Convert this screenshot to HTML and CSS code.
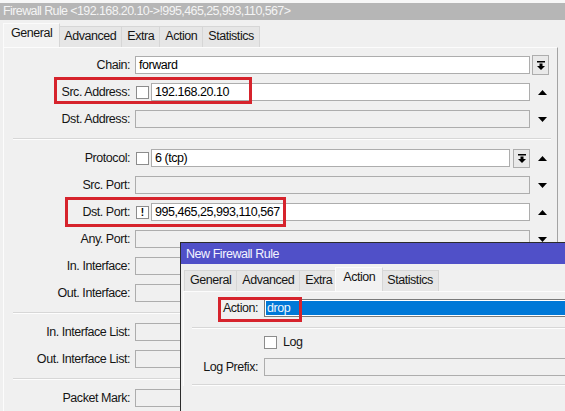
FILE: index.html
```html
<!DOCTYPE html>
<html>
<head>
<meta charset="utf-8">
<title>Firewall Rule</title>
<link rel="stylesheet" href="styles.css">
</head>
<body>
<div class="main">
  <div class="titlebar">Firewall Rule &lt;192.168.20.10-&gt;!995,465,25,993,110,567&gt;</div>
  <div class="tabs">
    <div class="tab sel">General</div>
    <div class="tab">Advanced</div>
    <div class="tab">Extra</div>
    <div class="tab">Action</div>
    <div class="tab">Statistics</div>
  </div>
  <div class="panel">
    <div class="row">
      <div class="lbl">Chain:</div>
      <div class="field"><div class="input white">forward</div></div>
      <div class="side side-btn"><div class="ddbtn tall"><svg width="8" height="9" viewBox="0 0 8 9"><rect x="0" y="0" width="8" height="1.5" fill="#000"/><path d="M2.5 2.6h3v2.4H8L4 9 0 5h2.5z" fill="#000"/></svg></div></div>
    </div>
    <div class="row">
      <div class="lbl">Src. Address:</div>
      <div class="field"><div class="cb"></div><div class="input white">192.168.20.10</div></div>
      <div class="side"><svg width="9" height="5" viewBox="0 0 9 5"><path d="M0 5L4.5 0 9 5z" fill="#000"/></svg></div>
      <div class="mark mark-src"></div>
    </div>
    <div class="row">
      <div class="lbl">Dst. Address:</div>
      <div class="field"><div class="input"></div></div>
      <div class="side"><svg width="9" height="5" viewBox="0 0 9 5"><path d="M0 0h9L4.5 5z" fill="#000"/></svg></div>
    </div>
    <div class="sep"></div>
    <div class="row">
      <div class="lbl">Protocol:</div>
      <div class="field"><div class="cb"></div><div class="input white">6 (tcp)</div><div class="ddbtn"><svg width="8" height="9" viewBox="0 0 8 9"><rect x="0" y="0" width="8" height="1.5" fill="#000"/><path d="M2.5 2.6h3v2.4H8L4 9 0 5h2.5z" fill="#000"/></svg></div></div>
      <div class="side"><svg width="9" height="5" viewBox="0 0 9 5"><path d="M0 5L4.5 0 9 5z" fill="#000"/></svg></div>
    </div>
    <div class="row">
      <div class="lbl">Src. Port:</div>
      <div class="field"><div class="input"></div></div>
      <div class="side"><svg width="9" height="5" viewBox="0 0 9 5"><path d="M0 0h9L4.5 5z" fill="#000"/></svg></div>
    </div>
    <div class="row">
      <div class="lbl">Dst. Port:</div>
      <div class="field"><div class="cb neg">!</div><div class="input white">995,465,25,993,110,567</div></div>
      <div class="side"><svg width="9" height="5" viewBox="0 0 9 5"><path d="M0 5L4.5 0 9 5z" fill="#000"/></svg></div>
      <div class="mark mark-dst"></div>
    </div>
    <div class="row">
      <div class="lbl">Any. Port:</div>
      <div class="field"><div class="input"></div></div>
      <div class="side"><svg width="9" height="5" viewBox="0 0 9 5"><path d="M0 0h9L4.5 5z" fill="#000"/></svg></div>
    </div>
    <div class="row">
      <div class="lbl">In. Interface:</div>
      <div class="field"><div class="input"></div></div>
      <div class="side"></div>
    </div>
    <div class="row">
      <div class="lbl">Out. Interface:</div>
      <div class="field"><div class="input"></div></div>
      <div class="side"></div>
    </div>
    <div class="sep"></div>
    <div class="row">
      <div class="lbl">In. Interface List:</div>
      <div class="field"><div class="input"></div></div>
      <div class="side"></div>
    </div>
    <div class="row">
      <div class="lbl">Out. Interface List:</div>
      <div class="field"><div class="input"></div></div>
      <div class="side"></div>
    </div>
    <div class="sep"></div>
    <div class="row">
      <div class="lbl">Packet Mark:</div>
      <div class="field"><div class="input"></div></div>
      <div class="side"></div>
    </div>
  </div>
</div>

<div class="dlg">
  <div class="dlg-title">New Firewall Rule</div>
  <div class="tabs dlg-tabs">
    <div class="tab">General</div>
    <div class="tab">Advanced</div>
    <div class="tab">Extra</div>
    <div class="tab sel">Action</div>
    <div class="tab">Statistics</div>
  </div>
  <div class="dlg-panel">
    <div class="drow">
      <div class="lbl">Action:</div>
      <div class="field"><div class="input selected">drop</div></div>
      <div class="mark mark-action"></div>
    </div>
    <div class="sep dsep first"></div>
    <div class="drow logrow">
      <div></div>
      <div class="field"><div class="cb"></div><span class="cblabel">Log</span></div>
    </div>
    <div class="drow prefixrow">
      <div class="lbl">Log Prefix:</div>
      <div class="field"><div class="input"></div></div>
    </div>
    <div class="sep dsep last"></div>
  </div>
</div>
</body>
</html>
```

FILE: styles.css
```css
* { box-sizing: border-box; }
html, body { margin: 0; padding: 0; }
body {
  width: 565px;
  height: 411px;
  overflow: hidden;
  position: relative;
  background: #f7f7f7;
  font-family: "Liberation Sans", Arial, sans-serif;
  font-size: 12.5px;
  letter-spacing: -0.45px;
  color: #151515;
}

.main {
  margin-top: 3px;
  background: #f0f0f0;
  height: 408px;
  overflow: hidden;
}

.titlebar {
  height: 17px;
  line-height: 17px;
  background: #b6b6b6;
  color: #f4f4f4;
  padding-left: 3px;
  white-space: nowrap;
  overflow: hidden;
  letter-spacing: -0.6px;
}

.tabs {
  display: flex;
  align-items: flex-end;
  height: 27px;
  padding-left: 5px;
}
.tab {
  height: 21px;
  line-height: 19px;
  padding: 0 5px;
  border: 1px solid #d6d6d6;
  border-bottom: none;
  background: #e6e6e6;
  white-space: nowrap;
  margin-right: -1px;
}
.tab.sel {
  height: 24px;
  line-height: 19px;
  padding: 0 7px;
  margin: 0 -2px 0 -2px;
  background: #f2f2f2;
  border-color: #fbfbfb #d6d6d6 transparent #fbfbfb;
  position: relative;
  z-index: 1;
}

.panel {
  margin: 0 7px 0 3px;
  height: 364px;
  border-top: 1px solid #fcfcfc;
  border-left: 1px solid #fcfcfc;
  border-right: 1px solid #a3a3a3;
  padding-top: 8px;
  display: flex;
  flex-direction: column;
  gap: 9px;
}

.row {
  position: relative;
  display: grid;
  grid-template-columns: 131px 395px 1fr;
  height: 18px;
  flex: none;
  align-items: center;
}
.lbl {
  text-align: right;
  padding-right: 5px;
  white-space: nowrap;
}
.field {
  display: flex;
  align-items: center;
  gap: 2px;
  height: 18px;
}
.input {
  flex: 1;
  height: 18px;
  line-height: 16px;
  border: 1px solid #adadad;
  background: #f0f0f0;
  padding-left: 3px;
  white-space: nowrap;
  overflow: hidden;
  color: #000;
}
.input.white { background: #fff; }

.cb {
  flex: none;
  width: 13px;
  height: 13px;
  margin-left: 1px;
  border: 1px solid #8c8c8c;
  background: #fff;
}
.cb.neg {
  font-weight: bold;
  font-size: 10px;
  line-height: 11px;
  letter-spacing: 0;
  text-align: center;
  color: #000;
}

.ddbtn {
  flex: none;
  width: 17px;
  height: 19px;
  border: 1px solid #adadad;
  background: #e9e9e9;
  display: flex;
  align-items: center;
  justify-content: center;
  margin-left: 1px;
}
.ddbtn.tall { height: 20px; margin-left: 0; }

.side {
  display: flex;
  align-items: center;
  padding-left: 8px;
  height: 18px;
}
.side.side-btn { padding-left: 2px; }

.sep {
  flex: none;
  height: 2px;
  margin: 1px 6px 0 9px;
  border-top: 1px solid #d7d7d7;
  border-bottom: 1px solid #fdfdfd;
}

.mark {
  position: absolute;
  border: 3px solid #d6232c;
  pointer-events: none;
}
.mark-src { left: 50px; top: -6px; width: 198px; height: 27px; }
.mark-dst { left: 61px; top: -6px; width: 221px; height: 30px; }
.mark-action { left: 34px; top: -2px; width: 84px; height: 25px; }

/* dialog window on top */
.dlg {
  position: absolute;
  left: 180px;
  top: 242px;
  width: 385px;
  height: 169px;
  overflow: hidden;
  background: #f0f0f0;
  border-left: 1px solid #2b2b2b;
  border-top: 1px solid #2b2b2b;
}
.dlg-title {
  height: 21px;
  line-height: 23px;
  background: #5050c8;
  color: #f4f4ff;
  padding-left: 5px;
  white-space: nowrap;
}
.dlg-tabs { padding-left: 3px; }
.dlg-panel {
  margin-left: 2px;
  margin-right: -40px;
  border-top: 1px solid #fcfcfc;
  border-left: 1px solid #fcfcfc;
  padding-top: 7px;
  display: flex;
  flex-direction: column;
}
.drow {
  position: relative;
  display: grid;
  grid-template-columns: 80px 1fr;
  height: 18px;
  align-items: center;
}
.drow .lbl { padding-right: 6px; }
.input.selected {
  background: #0078d7;
  border-color: #7a7a7a;
  box-shadow: inset 0 0 0 1px #ffffff;
  color: #eef5fd;
  padding-left: 2px;
}
.dsep { margin-left: 8px; margin-right: 0; }
.dsep.first { margin-top: 10px; margin-bottom: 0; }
.logrow { margin-top: 4px; }
.logrow .field { gap: 6px; }
.logrow .cb { margin-left: 0; }
.cblabel { color: #151515; }
.prefixrow { margin-top: 7px; }
.dsep.last { margin-top: 8px; }
```
